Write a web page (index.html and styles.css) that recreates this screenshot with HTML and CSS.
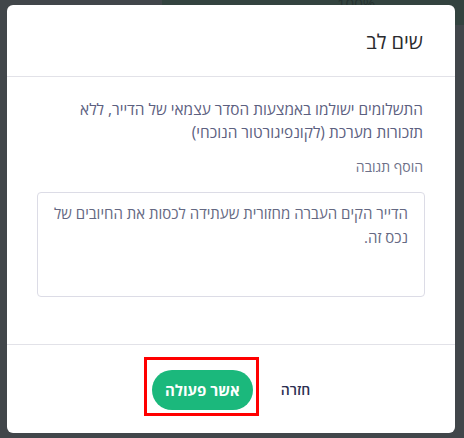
FILE: index.html
```html
<!DOCTYPE html>
<html lang="he" dir="rtl">
<head>
<meta charset="utf-8">
<link rel="stylesheet" href="styles.css">
</head>
<body>
<div class="backdrop">
  <div class="bg-strip"></div>
  <span class="bg-text">100%</span>
  <div class="modal">
    <div class="modal-header">
      <h2 class="modal-title">שים לב</h2>
    </div>
    <div class="modal-body">
      <p class="message">התשלומים ישולמו באמצעות הסדר עצמאי של הדייר, ללא תזכורות מערכת (לקונפיגורטור הנוכחי)</p>
      <label class="field-label" for="comment">הוסף תגובה</label>
      <textarea id="comment" class="comment" readonly>הדייר הקים העברה מחזורית שעתידה לכסות את החיובים של נכס זה.</textarea>
    </div>
    <div class="modal-footer">
      <button class="btn-back" type="button">חזרה</button>
      <div class="highlight">
        <button class="btn-confirm" type="button">אשר פעולה</button>
      </div>
    </div>
  </div>
</div>
</body>
</html>
```

FILE: styles.css
```css
* { box-sizing: border-box; }
html, body {
  margin: 0;
  padding: 0;
  width: 464px;
  height: 438px;
  overflow: hidden;
}
body {
  background: #41464a;
  font-family: "Open Sans", "Noto Sans", "DejaVu Sans", sans-serif;
}
.backdrop {
  position: relative;
  width: 464px;
  height: 438px;
  padding: 5px 9px 5px 7px;
}
.bg-strip {
  position: absolute;
  top: 0;
  right: 0;
  width: 302px;
  height: 25px;
  background: #33433f;
}
.bg-text {
  position: absolute;
  top: -5px;
  left: 337px;
  color: #263230;
  font-size: 15px;
  line-height: 16px;
  direction: ltr;
}
.modal {
  position: relative;
  width: 448px;
  height: 428px;
  background: #fff;
  border-radius: 6px;
  display: flex;
  flex-direction: column;
}
.modal-header {
  height: 72px;
  padding: 0 32px;
  display: flex;
  align-items: center;
  border-bottom: 1px solid #e2e2e8;
}
.modal-title {
  margin: 0;
  font-size: 20px;
  font-weight: 400;
  color: #2b2b2e;
  line-height: 1;
  padding-top: 2px;
}
.modal-body {
  padding: 21px 30px 47px;
  display: flex;
  flex-direction: column;
  border-bottom: 1px solid #e2e2e8;
}
.message {
  margin: 0;
  padding: 0 2px 0 0;
  font-size: 15.4px;
  line-height: 23px;
  font-weight: 500;
  color: #5c6080;
}
.field-label {
  margin-top: 11px;
  padding-right: 2px;
  font-size: 14px;
  line-height: 23px;
  color: #6e7189;
}
.comment {
  margin-top: 14px;
  width: 388px;
  height: 105px;
  border: 1px solid #dcdce6;
  border-radius: 4px;
  padding: 8px 16px;
  resize: none;
  font-family: inherit;
  font-size: 15px;
  line-height: 24px;
  color: #646882;
  outline: none;
}
.modal-footer {
  flex: 1;
  display: flex;
  align-items: center;
  justify-content: center;
  gap: 22px;
  padding: 0 8px 6px 0;
}
.btn-back {
  background: none;
  border: 0;
  padding: 0;
  font-family: inherit;
  font-size: 14px;
  font-weight: 600;
  color: #2c2f52;
  margin-top: 6px;
}
.highlight {
  border: 3px solid #ff0000;
  padding: 10px 3px 3px 5px;
}
.btn-confirm {
  display: block;
  width: 101px;
  height: 40px;
  border: 0;
  border-radius: 20px;
  background: #1bb87c;
  color: #fff;
  font-family: inherit;
  font-size: 15px;
  font-weight: 700;
  padding: 0;
}
```
